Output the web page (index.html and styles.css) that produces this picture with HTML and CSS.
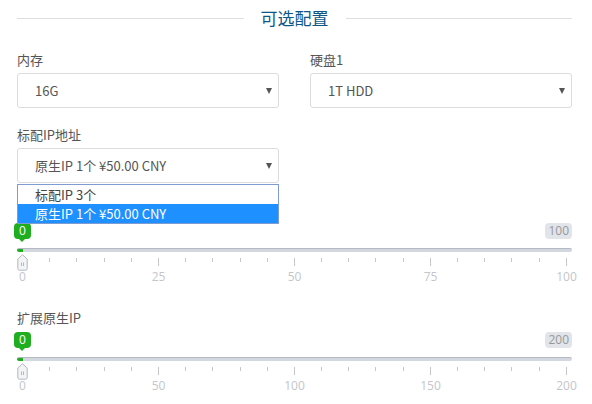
FILE: index.html
```html
<!DOCTYPE html>
<html lang="zh-CN">
<head>
<meta charset="utf-8">
<title>可选配置</title>
<link rel="stylesheet" href="styles.css">
</head>
<body>
<div class="page">
  <div class="section-title">
    <span class="rule"></span>
    <h2 class="title-text">可选配置</h2>
    <span class="rule"></span>
  </div>

  <div class="row-two">
    <div class="field">
      <label class="field-label">内存</label>
      <div class="select"><span class="select-value">16G</span><i class="caret"></i></div>
    </div>
    <div class="field">
      <label class="field-label">硬盘1</label>
      <div class="select"><span class="select-value">1T HDD</span><i class="caret"></i></div>
    </div>
  </div>

  <div class="row-two row-gap">
    <div class="field">
      <label class="field-label">标配IP地址</label>
      <div class="select-wrap">
        <div class="select"><span class="select-value">原生IP 1个 ¥50.00 CNY</span><i class="caret"></i></div>
        <ul class="dropdown">
          <li class="option">标配IP 3个</li>
          <li class="option active">原生IP 1个 ¥50.00 CNY</li>
        </ul>
      </div>
    </div>
  </div>

  <div class="slider-block first">
    <div class="field-label spacer"></div>
    <div class="irs">
      <div class="irs-top"><span class="badge badge-from">0</span><span class="badge badge-max">100</span></div>
      <div class="irs-track"><span class="irs-fill"></span></div>
      <div class="irs-handle">
        <svg width="11" height="17" viewBox="0 0 11 17"><path d="M5.5 0.8 L10.2 5 L10.2 14.5 Q10.2 16.2 8.5 16.2 L2.5 16.2 Q0.8 16.2 0.8 14.5 L0.8 5 Z" fill="#f3f4f6" stroke="#b3b7bf" stroke-width="1"/><path d="M4.5 8.5 V12 M6.5 8.5 V12" stroke="#b3b7bf" stroke-width="1"/></svg>
      </div>
      <div class="irs-grid">
        <div class="ticks">
          <span class="tick big"></span><span class="tick"></span><span class="tick"></span><span class="tick"></span><span class="tick"></span>
          <span class="tick big"></span><span class="tick"></span><span class="tick"></span><span class="tick"></span><span class="tick"></span>
          <span class="tick big"></span><span class="tick"></span><span class="tick"></span><span class="tick"></span><span class="tick"></span>
          <span class="tick big"></span><span class="tick"></span><span class="tick"></span><span class="tick"></span><span class="tick"></span>
          <span class="tick big"></span>
        </div>
        <div class="grid-labels">
          <span class="grid-label">0</span><span class="grid-label">25</span><span class="grid-label">50</span><span class="grid-label">75</span><span class="grid-label">100</span>
        </div>
      </div>
    </div>
  </div>

  <div class="slider-block second">
    <label class="field-label">扩展原生IP</label>
    <div class="irs">
      <div class="irs-top"><span class="badge badge-from">0</span><span class="badge badge-max">200</span></div>
      <div class="irs-track"><span class="irs-fill"></span></div>
      <div class="irs-handle">
        <svg width="11" height="17" viewBox="0 0 11 17"><path d="M5.5 0.8 L10.2 5 L10.2 14.5 Q10.2 16.2 8.5 16.2 L2.5 16.2 Q0.8 16.2 0.8 14.5 L0.8 5 Z" fill="#f3f4f6" stroke="#b3b7bf" stroke-width="1"/><path d="M4.5 8.5 V12 M6.5 8.5 V12" stroke="#b3b7bf" stroke-width="1"/></svg>
      </div>
      <div class="irs-grid">
        <div class="ticks">
          <span class="tick big"></span><span class="tick"></span><span class="tick"></span><span class="tick"></span><span class="tick"></span>
          <span class="tick big"></span><span class="tick"></span><span class="tick"></span><span class="tick"></span><span class="tick"></span>
          <span class="tick big"></span><span class="tick"></span><span class="tick"></span><span class="tick"></span><span class="tick"></span>
          <span class="tick big"></span><span class="tick"></span><span class="tick"></span><span class="tick"></span><span class="tick"></span>
          <span class="tick big"></span>
        </div>
        <div class="grid-labels">
          <span class="grid-label">0</span><span class="grid-label">50</span><span class="grid-label">100</span><span class="grid-label">150</span><span class="grid-label">200</span>
        </div>
      </div>
    </div>
  </div>
</div>
</body>
</html>
```

FILE: styles.css
```css
* { box-sizing: border-box; }
html, body { margin: 0; padding: 0; background: #fff; }
body {
  font-family: "Noto Sans CJK SC", "Open Sans", sans-serif;
  font-size: 13px;
  color: #555;
}
.page { padding: 0 20px 0 17px; }

.section-title {
  height: 36px;
  display: flex;
  align-items: center;
}
.rule { flex: 1; height: 1px; background: #dedede; }
.title-text {
  margin: 0 17px;
  font-size: 17px;
  font-weight: normal;
  line-height: 36px;
  color: #0e5688;
}

.row-two {
  margin-top: 14px;
  display: grid;
  grid-template-columns: 1fr 1fr;
  column-gap: 31px;
}
.row-gap { margin-top: 17px; }

.field-label {
  display: block;
  line-height: 20px;
  height: 20px;
  margin-bottom: 3px;
  color: #555;
}

.select-wrap { position: relative; }
.select {
  height: 35px;
  border: 1px solid #dcdcdc;
  border-radius: 3px;
  display: flex;
  align-items: center;
  padding: 0 6px 0 17px;
  background: #fff;
}
.select-value { flex: 1; color: #555; white-space: nowrap; }
.caret {
  width: 0; height: 0;
  border-left: 3.5px solid transparent;
  border-right: 3.5px solid transparent;
  border-top: 6px solid #555;
}

.dropdown {
  position: absolute;
  left: 0; right: 0;
  top: calc(100% + 1px);
  margin: 0; padding: 0;
  list-style: none;
  border: 1px solid #7f9cd2;
  background: #fff;
  z-index: 5;
}
.option {
  height: 19px;
  line-height: 19px;
  padding-left: 17px;
  color: #444;
  white-space: nowrap;
}
.option.active { background: #1e90ff; color: #fff; }

.slider-block.first { margin-top: 17px; }
.slider-block.second { margin-top: 24px; }
.slider-block.second .field-label { margin-bottom: 4px; }

.irs { position: relative; height: 61px; }
.irs-top {
  height: 16px;
  display: flex;
  justify-content: space-between;
  align-items: flex-start;
}
.badge {
  position: relative;
  height: 16px;
  line-height: 16px;
  font-size: 12px;
  border-radius: 4px;
  font-family: "Open Sans", "Noto Sans CJK SC", sans-serif;
}
.badge-from {
  margin-left: -3px;
  padding: 0 5px;
  background: #1fae1f;
  color: #fff;
}
.badge-from::after {
  content: "";
  position: absolute;
  left: 50%;
  bottom: -3px;
  margin-left: -3px;
  border-left: 3px solid transparent;
  border-right: 3px solid transparent;
  border-top: 3px solid #1fae1f;
}
.badge-max {
  padding: 0 3px;
  background: #e1e4e9;
  color: #999;
}

.irs-track {
  margin-top: 9px;
  height: 4px;
  border-radius: 2px;
  background: #d3d7df;
  border-top: 1px solid #b5b9c1;
  position: relative;
  overflow: hidden;
}
.irs-fill {
  display: block;
  width: 6px;
  height: 4px;
  margin-top: -1px;
  background: #1fae1f;
}

.irs-handle {
  position: absolute;
  left: 0;
  top: 31px;
  width: 11px;
  height: 17px;
  z-index: 2;
}
.irs-handle svg { display: block; }

.irs-grid { margin: 6px 5px 0 5px; }
.ticks {
  height: 8px;
  display: flex;
  justify-content: space-between;
  align-items: flex-start;
}
.tick { width: 1px; height: 4px; background: #c4c6ca; }
.tick.big { height: 8px; }
.grid-labels {
  margin-top: 4px;
  display: flex;
  justify-content: space-between;
}
.grid-label {
  width: 1px;
  display: flex;
  justify-content: center;
  white-space: nowrap;
  font-size: 12px;
  line-height: 14px;
  color: #c3c6cc;
  font-family: "Open Sans", "Noto Sans CJK SC", sans-serif;
}
```
